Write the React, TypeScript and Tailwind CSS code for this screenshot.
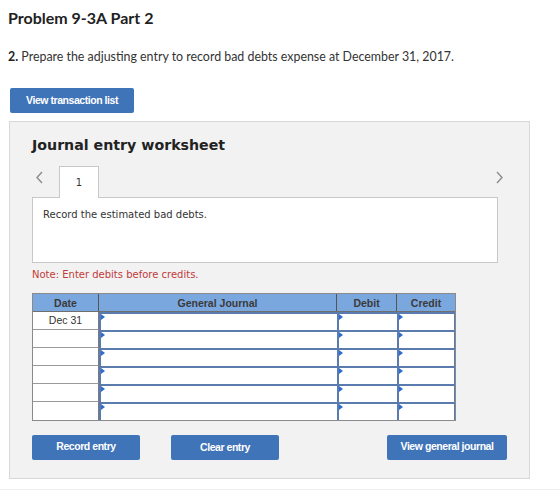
import React from "react";

const rows = ["Dec 31", "", "", "", "", ""];

function Marker() {
  return (
    <span className="absolute left-0 top-0 h-0 w-0 border-y-[3px] border-l-[4px] border-y-transparent border-l-[#2e6cd1]" />
  );
}

function InputCell({ width }: { width: string }) {
  return (
    <div className={`relative h-full border-t-2 border-l-2 border-[#5a7bad] bg-white ${width}`}>
      <Marker />
    </div>
  );
}

function Chevron({ dir }: { dir: "left" | "right" }) {
  return (
    <svg width="9" height="13" viewBox="0 0 9 13" className="text-[#8c8c8c]">
      <polyline
        points={dir === "left" ? "7,1 2,6.5 7,12" : "2,1 7,6.5 2,12"}
        fill="none"
        stroke="currentColor"
        strokeWidth="1.4"
      />
    </svg>
  );
}

function BlueButton({ label, width }: { label: string; width: string }) {
  return (
    <button
      className={`h-[25px] ${width} rounded-[2px] bg-[#3f74b8] text-[10.5px] font-bold tracking-[-0.45px] text-white`}
      style={{ fontFamily: '"Liberation Sans", Arial, sans-serif' }}
    >
      {label}
    </button>
  );
}

export default function App(): React.ReactElement {
  return (
    <div
      className="min-h-screen bg-white px-2 pt-2 text-[#333]"
      style={{ fontFamily: 'Lato, "Open Sans", sans-serif' }}
    >
      <h1 className="h-[20px] text-[16px] font-bold leading-[20px] text-[#222]">Problem 9-3A Part 2</h1>

      <p className="mt-[21px] h-[16px] text-[12.4px] leading-[16px] text-[#333]">
        <span className="font-bold text-[#222]">2.</span> Prepare the adjusting entry to record bad debts
        expense at December 31, 2017.
      </p>

      <div className="ml-[2px] mt-[23px] flex">
        <BlueButton label="View transaction list" width="w-[124px]" />
      </div>

      {/* Worksheet panel */}
      <div
        className="ml-px mt-[8px] w-[521px] border border-[#d8d8d8] bg-[#f2f2f2] pb-[18px] pl-[22px] pr-[21px] pt-[13px]"
        style={{ fontFamily: '"DejaVu Sans", Verdana, sans-serif' }}
      >
        <h2 className="text-[14.2px] font-bold leading-[20px] text-[#222]">Journal entry worksheet</h2>

        {/* Tabs */}
        <div className="mt-[11px] flex h-[31px] w-[472px] items-center">
          <div className="mt-[-8px] flex w-[27px] pl-[3px]">
            <Chevron dir="left" />
          </div>
          <div className="relative z-10 mb-[-1px] h-[32px] w-[40px] self-end border border-b-0 border-[#c8c8c8] bg-white pt-[8px] text-center text-[10px] text-[#333]">
            1
          </div>
          <div className="flex-1" />
          <div className="mt-[-8px]">
            <Chevron dir="right" />
          </div>
        </div>

        <div className="h-[66px] w-[466px] border border-[#c8c8c8] bg-white px-[10px] pt-[10px] text-[10px] leading-[14px] text-[#333]">
          Record the estimated bad debts.
        </div>

        <p className="mt-[5px] h-[14px] text-[10px] leading-[14px] text-[#c23a3a]">Note: Enter debits before credits.</p>

        {/* Journal table */}
        <div
          className="mt-[11px] w-[424px] border border-[#8a8a8a] bg-white"
          style={{ fontFamily: '"Liberation Sans", Arial, sans-serif' }}
        >
          <div className="flex h-[18px] border-b border-[#6f6f6f] bg-[#7ba7df] text-[10.5px] font-bold leading-[18px] text-[#3a3a3a]">
            <div className="w-[66px] border-r border-[#555] text-center">Date</div>
            <div className="w-[238px] border-r border-[#555] text-center">General Journal</div>
            <div className="w-[60px] border-r border-[#555] text-center">Debit</div>
            <div className="flex-1 text-center">Credit</div>
          </div>
          {rows.map((date, i) => (
            <div key={i} className="flex h-[18px]">
              <div
                className={`w-[66px] border-r border-[#7a7a7a] text-center text-[10.5px] leading-[17px] text-[#333] ${
                  i < rows.length - 1 ? "border-b border-b-[#9a9a9a]" : ""
                }`}
              >
                {date}
              </div>
              <InputCell width="w-[238px]" />
              <InputCell width="w-[60px]" />
              <div className="relative h-full flex-1 border-t-2 border-l-2 border-r border-[#5a7bad] bg-white">
                <Marker />
              </div>
            </div>
          ))}
        </div>

        {/* Actions */}
        <div className="mt-[13px] flex w-[475px] items-center">
          <BlueButton label="Record entry" width="w-[108px]" />
          <div className="ml-[31px]">
            <BlueButton label="Clear entry" width="w-[108px]" />
          </div>
          <div className="flex-1" />
          <BlueButton label="View general journal" width="w-[120px]" />
        </div>
      </div>

      <div className="-mx-2 mt-[10px] border-t border-[#efefef]" />
    </div>
  );
}
